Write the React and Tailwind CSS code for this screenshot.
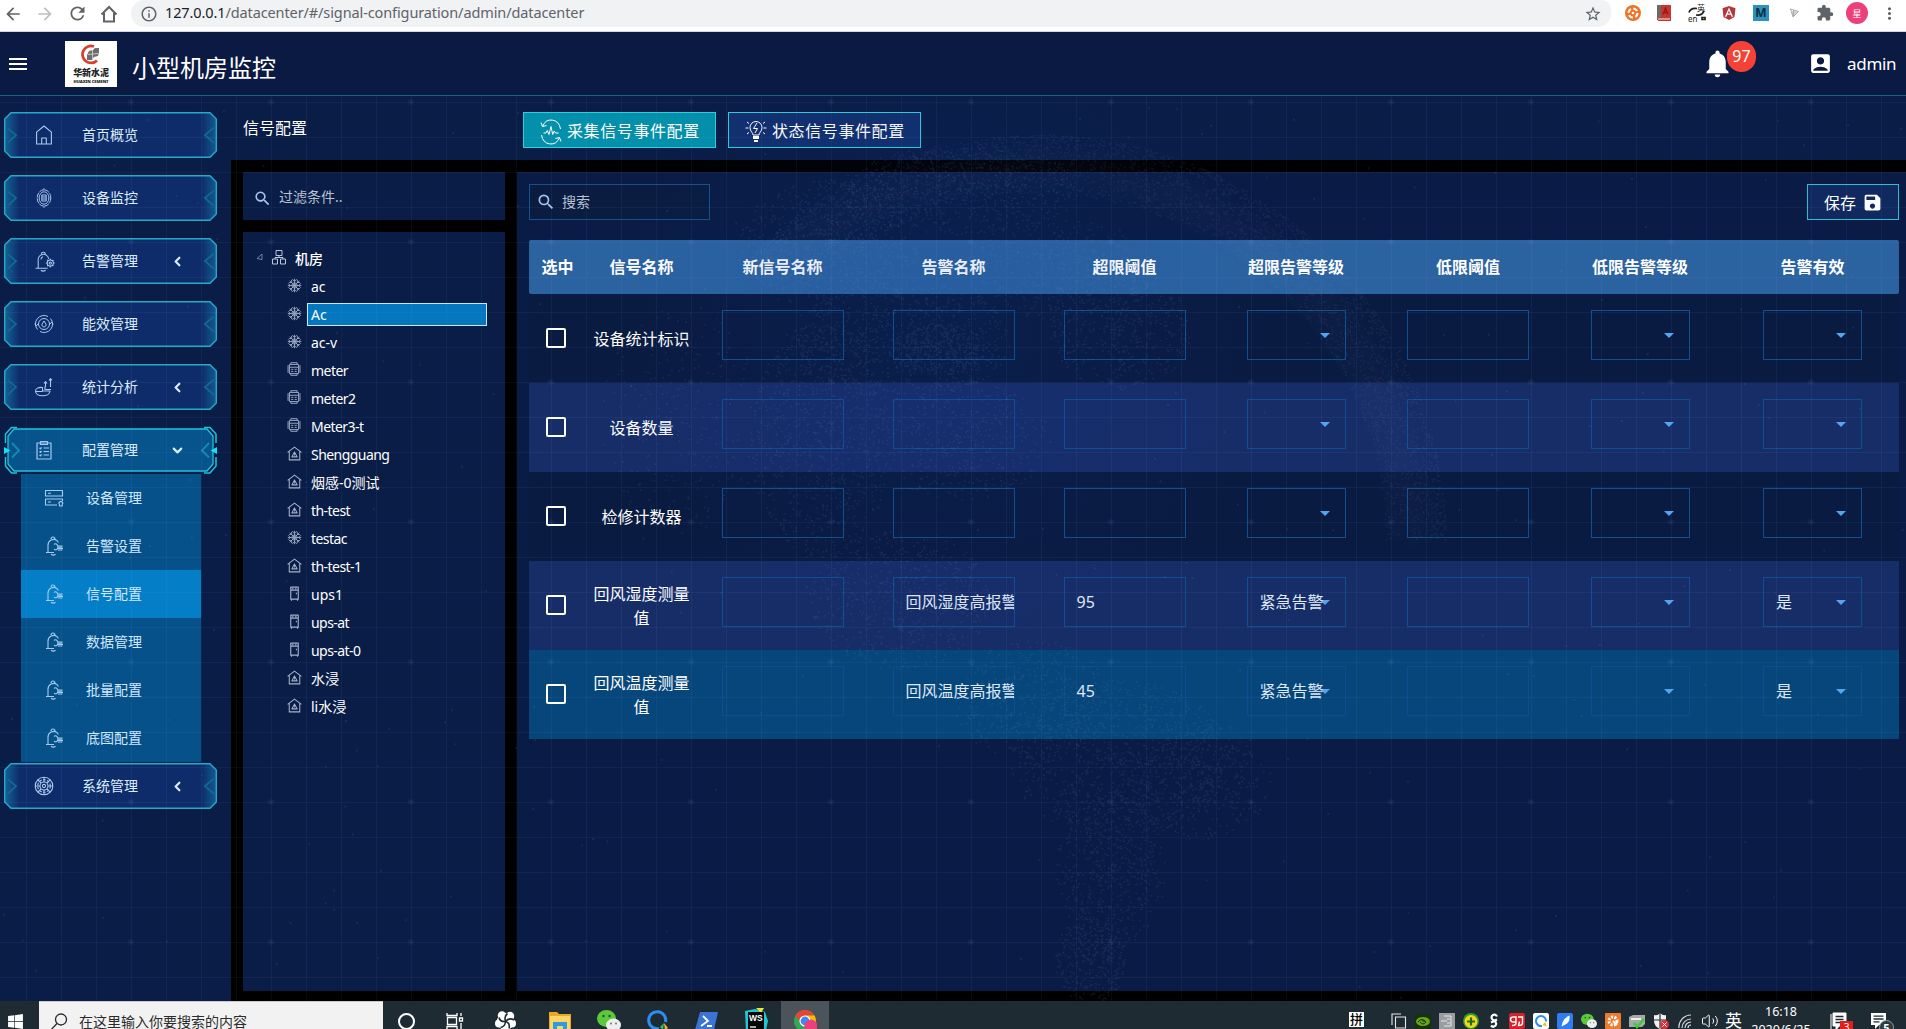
import React from "react";
import {
  MdNotifications,
  MdAccountBox,
  MdSave,
  MdSearch,
  MdMenu,
  MdExtension,
  MdMoreVert,
  MdStarBorder,
  MdInfoOutline,
  MdArrowBack,
  MdArrowForward,
  MdRefresh,
} from "react-icons/md";
import { FaAngular, FaWindows } from "react-icons/fa";
import { ChevronLeft, ChevronDown, Volume2 } from "lucide-react";

/* ---------- background ---------- */

function makeRandom(seed) {
  let s = seed;
  return () => {
    s = (s * 1664525 + 1013904223) % 4294967296;
    return s / 4294967296;
  };
}

function buildGlobe() {
  const rnd = makeRandom(7);
  let rim = "";
  let land = "";
  const dot = (x, y) => `M${x.toFixed(1)} ${y.toFixed(1)}h1.8`;
  for (let i = 0; i < 3600; i++) {
    const a = -2.4 + rnd() * 2.4;
    const r = 405 - Math.pow(rnd(), 1.4) * 60;
    rim += dot(1040 + Math.cos(a) * r, 540 + Math.sin(a) * r);
  }
  const blobs = [
    [830, 240, 90, 60, 600],
    [960, 190, 120, 45, 600],
    [900, 340, 110, 60, 750],
    [940, 350, 50, 25, 350],
    [1120, 330, 70, 60, 450],
    [820, 440, 70, 120, 800],
    [960, 440, 90, 60, 450],
    [900, 600, 90, 70, 550],
    [1060, 270, 100, 50, 400],
    [1030, 700, 80, 60, 450],
    [1120, 760, 110, 80, 900],
    [1200, 780, 70, 60, 400],
    [1110, 870, 55, 80, 550],
    [1090, 960, 35, 45, 350],
    [680, 420, 80, 120, 250],
  ];
  blobs.forEach(([cx, cy, rx, ry, n]) => {
    for (let i = 0; i < n; i++) {
      const a = rnd() * Math.PI * 2;
      const r = Math.pow(rnd(), 0.6);
      land += dot(cx + Math.cos(a) * r * rx, cy + Math.sin(a) * r * ry);
    }
  });
  let stars = "";
  for (let i = 0; i < 240; i++) stars += dot(rnd() * 1906, 100 + rnd() * 900);
  return { rim, land, stars };
}

const globe = buildGlobe();

function Backdrop() {
  return (
    <svg className="pointer-events-none absolute inset-0" width="1906" height="905" viewBox="0 96 1906 905">
      <defs>
        <pattern id="grid" width="35" height="35" x="26" y="32" patternUnits="userSpaceOnUse">
          <path d="M0.5 0V35M0 0.5H35" stroke="#8fb4ff" strokeOpacity="0.055" fill="none" />
        </pattern>
        <radialGradient id="knot">
          <stop offset="0" stopColor="#8fb4ff" stopOpacity="0.11" />
          <stop offset="1" stopColor="#8fb4ff" stopOpacity="0" />
        </radialGradient>
        <pattern id="knots" width="140" height="140" x="61" y="32" patternUnits="userSpaceOnUse">
          <circle cx="70" cy="70" r="4" fill="url(#knot)" />
        </pattern>
        <radialGradient id="glow" cx="940" cy="330" r="330" gradientUnits="userSpaceOnUse">
          <stop offset="0" stopColor="#0a3aa0" stopOpacity="0.12" />
          <stop offset="1" stopColor="#0a3aa0" stopOpacity="0" />
        </radialGradient>
        <filter id="soft" x="-10%" y="-10%" width="120%" height="120%">
          <feGaussianBlur stdDeviation="12" />
        </filter>
      </defs>
      <rect y="96" width="1906" height="905" fill="url(#grid)" />
      <rect y="96" width="1906" height="905" fill="url(#knots)" />
      <rect x="600" y="96" width="700" height="600" fill="url(#glow)" />
      <path
        d="M760 276A385 385 0 0 1 1412 540"
        fill="none"
        stroke="#5f86c8"
        strokeOpacity="0.04"
        strokeWidth="30"
        filter="url(#soft)"
      />
      <path d={globe.rim} stroke="#7d9ac8" strokeOpacity="0.085" strokeWidth="1.6" />
      <path d={globe.land} stroke="#7d9ac8" strokeOpacity="0.11" strokeWidth="1.6" />
      <path d={globe.stars} stroke="#8fb0e8" strokeOpacity="0.11" strokeWidth="2" />
    </svg>
  );
}

/* ---------- line icons ---------- */

function Line({ size = 20, w = 1.1, className = "", children }) {
  return (
    <svg
      className={className}
      width={size}
      height={size}
      viewBox="0 0 20 20"
      fill="none"
      stroke="currentColor"
      strokeWidth={w}
      strokeLinejoin="round"
    >
      {children}
    </svg>
  );
}

const icons = {
  home: (
    <Line>
      <path d="M2.6 7.2 10 1l7.4 6.200V19H2.600zM7.700 19v-6h4.600v6" />
    </Line>
  ),
  device: (
    <Line w={1}>
      <ellipse cx="10" cy="10" rx="6.800" ry="8.200" strokeDasharray="5 1" />
      <ellipse cx="10" cy="10" rx="4.900" ry="6.200" />
      <path d="M7.800 7h4.400v6H7.800zM7.800 9h4.400M7.800 11h4.400M10 .3v2M10 17.700v2" />
    </Line>
  ),
  alarm: (
    <Line size={21} w={1}>
      <path d="M4 16.500V9a5 5 0 0 1 10-1.500M1.500 16.500H13M7 3a1.900 1.900 0 0 1 3.800 0M6.500 18.300q2.300 1.700 4.600 0M6.500 8q.5-2 2-2.500" />
      <circle cx="15.500" cy="11.500" r="2.900" />
      <circle cx="15.500" cy="11.500" r="1.100" />
      <path d="M15.500 7.300v1.300M15.500 14.400v1.400M11.300 11.500h1.300M18.400 11.500h1.400M12.500 8.500l1 1M17.500 13.500l1 1M18.500 8.500l-1 1M12.500 14.500l1-1" />
    </Line>
  ),
  energy: (
    <Line w={1}>
      <circle cx="10" cy="10" r="5.500" />
      <path d="M10 7l-2 3.200a2.100 2.100 0 1 0 4 0z" />
      <path d="M3.500 15.500A8.500 8.500 0 0 1 14 2.500M16.500 4.500A8.500 8.500 0 0 1 6 17.500M.8 9.500l1.400 2.500 1.800-2M19.200 10.500l-1.400-2.500-1.800 2" />
    </Line>
  ),
  stats: (
    <Line w={1.1}>
      <path d="M1.500 14c0-2.500 3-4 7-3.500v3.500h7.500c0 3-3.500 4.800-7.500 4.800s-7-2-7-4.800zM11 9.500v3h6M11.500 10V5M16.500 10V2M10 6.500l1.500-1.800L13 6.500M15 3.500l1.500-1.800L18 3.500M1.500 14.500h7" />
    </Line>
  ),
  config: (
    <Line w={1.200}>
      <path d="M3 3h14v16H3zM6.500 1.500h7v3h-7zM9.500 8H15M9.500 11.500H15M9.500 15H15M5.500 8l1 .8 1-1.400M5.500 11.500l1 .8 1-1.400M5.500 15l1 .8 1-1.400" />
    </Line>
  ),
  system: (
    <Line w={1.100}>
      <circle cx="10" cy="10" r="8.800" />
      <circle cx="10" cy="10" r="6.300" strokeDasharray="2.600 1.400" />
      <circle cx="10" cy="10" r="4" />
      <circle cx="10" cy="10" r="1.600" />
      <path d="M10 1v5M10 14v5M1 10h5M14 10h5M3.600 3.600 7 7M13 13l3.400 3.400M16.400 3.600 13 7M7 13l-3.400 3.400" />
    </Line>
  ),
  server: (
    <Line w={1.100}>
      <path d="M1.500 2.500h17v5.500h-17zM4 5.300h3M13 17h-11.500V11h17v2M4 14h3M15.500 16.500a1.800 1.800 0 1 1 2.700 0v1.500h-2.700z" />
    </Line>
  ),
  bellset: (
    <Line w={1.100}>
      <path d="M4 16.500V9a5.500 5.500 0 0 1 9-4.300l1.500 1.800M2 16.500h8M7 3a2 2 0 0 1 4 0M7 18.300q2.300 1.700 4.500 0" />
      <path d="M10 8.500a2 2 0 0 1 3.500 1.500h5M10 13a2 2 0 0 0 3.500-.5h5.500M13 11.200h5.500M14 14h4.500" />
    </Line>
  ),
};

const treeIcons = {
  snow: (
    <Line size={15} w={1.100}>
      <path d="M10 1v18M1 10h18M3.600 3.600l12.800 12.800M16.400 3.600 3.600 16.400" />
      <path d="M7 1.500 10 4.500l3-3M7 18.500l3-3 3 3M1.500 7l3 3-3 3M18.500 7l-3 3 3 3M2.800 6h3.400V2.500M17.200 6h-3.400V2.500M2.800 14h3.400v3.500M17.200 14h-3.400v3.500" />
      <circle cx="10" cy="10" r="3.500" />
    </Line>
  ),
  meter: (
    <Line size={14} w={1.300}>
      <path d="M3.500 3.500h13v13h-13zM5.500 3.500V1h9v2.500M5.500 16.500V19h9v-2.500M1.500 4.500v11M18.500 4.500v11M3.500 7.500h13M6 10.500h3M11 10.500h3M6 13.500h3M11 13.500h3" />
    </Line>
  ),
  house: (
    <Line size={15} w={1.400}>
      <path d="M.8 8.500 10 1.500 19.200 8.500M3 7V18.500h14V7M10 8 6.500 14.500h7zM10 11v1.500" />
    </Line>
  ),
  ups: (
    <Line size={15} w={1.500}>
      <path d="M5 1.500h10v16H5zM5 5.500h10M7 3.500h1.500M11 3.500h1.500M6 17.500v2M14 17.500v2M12.500 9v2" />
    </Line>
  ),
};

/* ---------- browser bar ---------- */

function BrowserBar() {
  return (
    <div className="flex h-8 w-full items-start bg-white pt-[2px] text-[#5f6368] border-b border-[#d5d7db]">
      <div className="flex h-[23px] w-[131px] shrink-0 items-center gap-[12px] pl-[3px]">
        <MdArrowBack size={20} />
        <MdArrowForward size={20} className="text-[#bdbfc3]" />
        <MdRefresh size={21} />
        <svg width="18" height="18" viewBox="0 0 18 18" fill="none" stroke="currentColor" strokeWidth="2">
          <path d="M1.500 9.500 9 2l7.500 7.500M4 8v8.500h10V8" />
        </svg>
      </div>
      <div className="-mt-[2px] flex h-[27px] w-[1480px] shrink-0 items-center rounded-br-[14px] rounded-l-[14px] rounded-tr-[10px] bg-[#f0f2f4] pr-[9px] pl-[9px]">
        <MdInfoOutline size={18} />
        <span className="-mt-[3px] ml-[7px] whitespace-nowrap text-[14.500px] leading-5 tracking-[-0.110px]">
          <span className="text-[#202124]">127.0.0.1</span>/datacenter/#/signal-configuration/admin/datacenter
        </span>
        <MdStarBorder size={18} className="ml-auto" />
      </div>
      <div className="-mt-[1px] flex h-6 flex-1 items-center pl-[14px]">
        <svg width="16" height="16" viewBox="0 0 16 16">
          <circle cx="8" cy="8" r="8" fill="#f07427" />
          <circle cx="8" cy="8" r="4.500" fill="none" stroke="#fff" strokeWidth="2.200" strokeDasharray="4.500 2.500" />
          <circle cx="8" cy="8" r="1.300" fill="#fff" />
        </svg>
        <svg className="ml-[16px]" width="14" height="16" viewBox="0 0 14 16">
          <path d="M0 0h14v16H1.500L0 14.500z" fill="#c8372f" />
          <path d="M0 0h4v13H0z" fill="#6b6a66" />
          <path d="M1 14h12" stroke="#eee" />
          <path d="M6 9.500 8.500 3 11 9.500M7 7.500h3" stroke="#8d1a14" strokeWidth="1.300" fill="none" />
        </svg>
        <div className="relative ml-[17px] h-5 w-[18px] text-[#222]">
          <span className="absolute top-0 right-[1px] text-[8px] leading-[9px]">英</span>
          <span className="absolute bottom-0 left-0 text-[8px] leading-[8px]">en</span>
          <svg className="absolute inset-0" width="18" height="18" viewBox="0 0 18 18" fill="none" stroke="#222" strokeWidth="1.700">
            <path d="M1 9.500c1-3.500 4-4.500 8-4M8 12c4 .5 7-1 8-4.500M14 14.500h3v2h-3z" />
          </svg>
        </div>
        <FaAngular className="ml-[15px] text-[#b5363c]" size={16} />
        <div className="ml-[16px] flex h-4 w-4 items-center justify-center bg-[#2b92bd] text-[12px] font-bold leading-4 text-[#0d2b40]">
          M
        </div>
        <svg className="ml-[21px]" width="9" height="10" viewBox="0 0 9 10" fill="none" stroke="#a9a9a9">
          <path d="M.5 1 8.500 3.500 3 9zM2 4h5M3.500 2v6M2 6h4" />
        </svg>
        <MdExtension className="ml-[17px]" size={18} />
        <div className="ml-[12px] flex h-[22px] w-[22px] items-center justify-center rounded-full bg-[#ec407a] text-[9px] leading-none text-white">
          星
        </div>
        <MdMoreVert className="ml-[12px]" size={19} />
      </div>
    </div>
  );
}

/* ---------- header ---------- */

function Header() {
  return (
    <div className="flex h-16 w-full items-center border-b border-[#17647f] bg-[#0a1a42] pr-[10px] pl-[6px] text-white">
      <MdMenu size={24} />
      <div className="ml-[35px] flex h-[46px] w-[52px] flex-col items-center bg-white pt-[3px]">
        <svg width="22" height="22" viewBox="0 0 22 22">
          <path d="M14 2.500A8.500 8.500 0 1 0 17 16.500" fill="none" stroke="#d8402c" strokeWidth="2.800" />
          <path d="M9 7l4-1 2-2h4v4l-1 4-4 1-2 3H7v-5z" fill="#6d6d6d" />
          <path d="M12.500 6v9M8 10.500l10-1" stroke="#ddd" strokeWidth=".8" />
        </svg>
        <div className="mt-[1px] text-[9px] font-black leading-[12px] tracking-[-0.1px] text-[#222]">华新水泥</div>
        <div className="whitespace-nowrap text-[4.200px] font-black leading-[5px] tracking-[-0.100px] text-[#222]">HUAXIN CEMENT</div>
      </div>
      <h1 className="mt-[9px] ml-[15px] text-2xl leading-8">小型机房监控</h1>
      <div className="relative ml-auto flex h-9 w-[52px] items-center">
        <MdNotifications size={33} />
        <div className="absolute -top-[5px] left-[26px] flex h-[31px] w-[29px] items-center justify-center rounded-full bg-[#f44336] text-base leading-none">
          97
        </div>
      </div>
      <MdAccountBox size={25} className="ml-[55px]" />
      <span className="ml-[14px] w-[49px] whitespace-nowrap text-[17px] leading-6 tracking-[-0.300px]">admin</span>
    </div>
  );
}

/* ---------- sidebar ---------- */

function Frame({ active }) {
  return (
    <svg className="absolute inset-0 overflow-visible" width="213" height="46" viewBox="0 0 213 46" fill="none">
      <defs>
        <linearGradient id="fade" x1="0" x2="1">
          <stop offset="0" stopColor="#19b6da" stopOpacity="0.4" />
          <stop offset="0.070" stopColor="#19b6da" stopOpacity="0" />
          <stop offset="0.930" stopColor="#19b6da" stopOpacity="0" />
          <stop offset="1" stopColor="#19b6da" stopOpacity="0.35" />
        </linearGradient>
      </defs>
      {active ? (
        <>
          <path d="M10 2H203L209 9V37L203 44H10L4 37V9z" fill="#07538c" stroke="#1fc4df" strokeWidth="1.300" />
          <path
            d="M13 .5H7.500L1.500 7v9M200 .5h6l6 6.500v9M13 46H7.500L1.500 39v-9M200 46h6l6-7v-9"
            stroke="#1cc4dc"
            strokeWidth="1.500"
          />
          <path d="M0 20v7l6.500-3.500zM213 20v7l-6.500-3.500z" fill="#12e0f5" />
          <path d="M8 16 15 23.500l-7 7M205 16l-7 7.500 7 7" stroke="#1488ae" strokeWidth="2" />
        </>
      ) : (
        <>
          <path d="M7 .7H206L212.300 7V39L206 45.300H7L.7 39V7z" fill="#0e2c69" />
          <path d="M7 .7H206L212.300 7V39L206 45.300H7L.7 39V7z" fill="url(#fade)" stroke="#27a9c6" strokeWidth="1.400" />
          <path d="M4 16.500 12 23l-8 7.500M210 15.500 201 23l9 8" stroke="#14688f" strokeWidth="1.800" />
        </>
      )}
    </svg>
  );
}

function MenuButton({ icon, label, arrow, active }) {
  return (
    <div className="relative ml-1 flex h-[46px] w-[213px] items-center text-[#dcecff]">
      <Frame active={active} />
      <span className="relative ml-[29px] flex w-[22px] justify-center text-[#a9c8ee]">{icons[icon]}</span>
      <span className="relative ml-[27px] w-[86px] text-sm leading-5">{label}</span>
      {arrow === "left" && <ChevronLeft className="relative ml-[2px]" size={15} strokeWidth={3.500} />}
      {arrow === "down" && <ChevronDown className="relative ml-[2px]" size={15} strokeWidth={3.500} />}
    </div>
  );
}

function SubItem({ icon, label, selected }) {
  return (
    <div
      className={
        "flex h-12 items-center text-sm leading-5 text-[#cfe8ff] " + (selected ? "bg-[#057ec8]" : "bg-[#06518a]")
      }
    >
      <span className="ml-[22px] flex w-[21px] justify-center text-[#a5cbee]">{icons[icon]}</span>
      <span className="ml-[22px]">{label}</span>
    </div>
  );
}

function Sidebar() {
  return (
    <div className="flex w-[231px] shrink-0 flex-col bg-[#0a1d47] pt-4">
      <div className="flex flex-col gap-[17px]">
        <MenuButton icon="home" label="首页概览" />
        <MenuButton icon="device" label="设备监控" />
        <MenuButton icon="alarm" label="告警管理" arrow="left" />
        <MenuButton icon="energy" label="能效管理" />
        <MenuButton icon="stats" label="统计分析" arrow="left" />
        <MenuButton icon="config" label="配置管理" arrow="down" active />
      </div>
      <div className="mt-[1px] mb-[1px] ml-[21px] w-[180px]">
        <SubItem icon="server" label="设备管理" />
        <SubItem icon="bellset" label="告警设置" />
        <SubItem icon="bellset" label="信号配置" selected />
        <SubItem icon="bellset" label="数据管理" />
        <SubItem icon="bellset" label="批量配置" />
        <SubItem icon="bellset" label="底图配置" />
      </div>
      <MenuButton icon="system" label="系统管理" arrow="left" />
    </div>
  );
}

/* ---------- device tree ---------- */

const devices = [
  ["snow", "ac"],
  ["snow", "Ac", true],
  ["snow", "ac-v"],
  ["meter", "meter"],
  ["meter", "meter2"],
  ["meter", "Meter3-t"],
  ["house", "Shengguang"],
  ["house", "烟感-0测试"],
  ["house", "th-test"],
  ["snow", "testac"],
  ["house", "th-test-1"],
  ["ups", "ups1"],
  ["ups", "ups-at"],
  ["ups", "ups-at-0"],
  ["house", "水浸"],
  ["house", "li水浸"],
];

function Tree() {
  return (
    <div className="flex-1 bg-[#0a1d47] pt-3 text-sm text-white">
      <div className="flex h-7 items-center pt-[1px]">
        <svg className="ml-[13px] -mt-[3px]" width="8" height="8" viewBox="0 0 8 8" fill="none" stroke="#8b9bb9" strokeWidth=".8">
          <path d="M1 5.500 6 1v5.500z" />
        </svg>
        <svg className="ml-[8px] -mt-[2px]" width="14" height="15" viewBox="0 0 14 15" fill="none" stroke="#b9c6dc">
          <path d="M4 .5h6v5H4zM.5 9h5v5h-5zM8.500 9h5v5h-5zM7 5.500V7.500M3 9V7.500h8V9" />
        </svg>
        <span className="ml-[9px] font-medium leading-5">机房</span>
      </div>
      {devices.map(([icon, label, selected]) => (
        <div key={label} className="flex h-7 items-center">
          <span className="ml-[43px] -mt-[2px] flex w-4 justify-center text-[#a3b1cb]">{treeIcons[icon]}</span>
          <span
            className={
              "ml-[5px] h-[23px] w-[180px] border pl-[3px] leading-[22px] " +
              (/^[\x00-\x7f]+$/.test(label) && label.length > 4 ? "tracking-[-0.550px] " : "") +
              (selected ? "border-[#cfe6f8] bg-[#0577bf]" : "border-transparent")
            }
          >
            {label}
          </span>
        </div>
      ))}
    </div>
  );
}

/* ---------- table ---------- */

const headers = ["选中", "信号名称", "新信号名称", "告警名称", "超限阈值", "超限告警等级", "低限阈值", "低限告警等级", "告警有效"];

const rows = [
  { name: "设备统计标识", tone: "plain" },
  { name: "设备数量", tone: "even" },
  { name: "检修计数器", tone: "plain" },
  { name: "回风湿度测量值", alarm: "回风湿度高报警", high: "95", level: "紧急告警", valid: "是", tone: "even" },
  { name: "回风温度测量值", alarm: "回风温度高报警", high: "45", level: "紧急告警", valid: "是", tone: "hover" },
];

const tones = {
  plain: "bg-[#0a1b41]",
  even: "bg-[#172d68]",
  hover: "bg-[#07467a]",
};

function Field({ value, dim }) {
  return (
    <div
      className={
        "mx-auto mt-4 h-[50px] w-[122px] overflow-hidden whitespace-nowrap border pl-[12px] text-base leading-[48px] text-[#dfe9f8] " +
        (dim ? "border-[#0b4e90]" : "border-[#114e91]")
      }
    >
      {value}
    </div>
  );
}

function Select({ value, dim }) {
  return (
    <div
      className={
        "relative mx-auto mt-4 h-[50px] w-[99px] whitespace-nowrap border pl-[12px] text-base leading-[48px] text-[#dfe9f8] " +
        (dim ? "border-[#0b4e90]" : "border-[#114e91]")
      }
    >
      <svg className="absolute top-[22px] right-[15px]" width="10" height="5" viewBox="0 0 10 5">
        <path d="M0 0h10L5 5z" fill="#55a4f0" />
      </svg>
      <span className="relative">{value}</span>
    </div>
  );
}

const grid = "grid grid-cols-[57px_111px_171px_171px_171px_172px_172px_172px_173px]";

function Table() {
  return (
    <div className="mt-5">
      <div className={grid + " h-[54px] items-center rounded-[2px] bg-[#2b62a0] text-center text-base font-bold text-white"}>
        {headers.map((h) => (
          <div key={h} className="leading-6">
            {h}
          </div>
        ))}
      </div>
      {rows.map((r) => {
        const dim = r.tone === "hover";
        return (
          <div key={r.name} className={grid + " h-[89px] " + tones[r.tone]}>
            <div className="flex items-center justify-center">
              <div className="mr-[3px] mb-[2px] h-5 w-5 rounded-[2px] border-2 border-white" />
            </div>
            <div className="flex items-center justify-center px-[7px] pt-[1px] text-center text-base leading-6 text-white">
              {r.name}
            </div>
            <Field dim={dim} />
            <Field value={r.alarm} dim={dim} />
            <Field value={r.high} dim={dim} />
            <Select value={r.level} dim={dim} />
            <Field dim={dim} />
            <Select dim={dim} />
            <Select value={r.valid} dim={dim} />
          </div>
        );
      })}
    </div>
  );
}

/* ---------- main area ---------- */

function Tabs() {
  return (
    <div className="flex gap-3 text-base leading-6 text-white">
      <div className="flex h-9 w-[193px] items-center border border-[#2bd0dc] bg-[#048fab] pl-[16px]">
        <svg className="mt-[3px]" width="22" height="26" viewBox="0 0 22 26" fill="none" stroke="currentColor" strokeWidth="1">
          <path d="M2.500 7.500A9.500 11 0 0 1 20.500 10M19.500 18.500A9.500 11 0 0 1 1.500 16M1 3.500l1.500 4 4-1M21 22.500l-1.500-4-4 1M3.500 14h2.500l1.300-2.500 1.700 4 2-8 1.700 8 1.500-3.500 1.300 2h3" />
        </svg>
        <span className="ml-[5px] mt-[1px] whitespace-nowrap tracking-[0.600px]">采集信号事件配置</span>
      </div>
      <div className="flex h-9 w-[193px] items-center border border-[#2bd0dc] bg-[#12306e] pl-[16px]">
        <svg className="mt-[2px]" width="22" height="24" viewBox="0 0 22 24" fill="none" stroke="currentColor" strokeWidth="1">
          <path d="M8 16c0-2.500-3-3.500-3-7.500a6 6 0 0 1 12 0c0 4-3 5-3 7.500zM12 4 8.500 9.500h4L10 14M.5 9h3M18.500 9h3M2 3l2 1.500M20 3l-2 1.500M2 15l2-1.500M20 15l-2-1.500" />
          <path d="M8 17h6v3H8zM9 21h4v2H9z" fill="currentColor" stroke="none" />
        </svg>
        <span className="ml-[5px] mt-[1px] whitespace-nowrap tracking-[0.600px]">状态信号事件配置</span>
      </div>
    </div>
  );
}

function Main() {
  return (
    <div className="flex flex-1 flex-col bg-black">
      <div className="flex h-16 items-start bg-[#0a1d47] pt-4">
        <div className="mt-[4px] ml-3 w-[280px] text-base leading-6 text-white">信号配置</div>
        <Tabs />
      </div>
      <div className="flex flex-1 gap-3 pt-3 pb-[10px] pl-3">
        <div className="flex w-[262px] shrink-0 flex-col gap-3">
          <div className="flex h-12 items-center bg-[#0a1d47] pl-[10px] text-sm text-[#b9c2d3]">
            <MdSearch size={19} className="mt-[4px] text-[#a8c4f2]" />
            <span className="mt-[2px] ml-[7px] leading-5">过滤条件..</span>
          </div>
          <Tree />
        </div>
        <div className="flex-1 bg-[#0a1c45] pt-3 pr-[7px] pl-3">
          <div className="flex justify-between">
            <div className="flex h-9 w-[181px] items-center border border-[#15508f] bg-[#0a1c40] pl-[6px] text-sm text-[#b9c2d3]">
              <MdSearch size={20} className="text-[#a8c4f2]" />
              <span className="ml-[6px] leading-5">搜索</span>
            </div>
            <div className="flex h-9 w-[92px] items-center border border-[#2bbfd2] bg-[#10295f] pl-[16px] text-base text-white">
              <span className="mt-[1px] leading-6">保存</span>
              <MdSave size={21} className="ml-[6px]" />
            </div>
          </div>
          <Table />
        </div>
      </div>
    </div>
  );
}

/* ---------- taskbar ---------- */

function WeChat({ size, className }) {
  return (
    <svg className={className} width={size} height={size} viewBox="0 0 24 24">
      <ellipse cx="9.500" cy="9.500" rx="9.500" ry="8.500" fill="#5cc83c" />
      <circle cx="6.500" cy="7" r="1.200" fill="#1e5e1a" />
      <circle cx="12.500" cy="7" r="1.200" fill="#1e5e1a" />
      <ellipse cx="16.500" cy="16" rx="7.500" ry="6.500" fill="#eee" />
      <circle cx="14" cy="14.500" r="1" fill="#777" />
      <circle cx="19" cy="14.500" r="1" fill="#777" />
    </svg>
  );
}

function App16({ children }) {
  return (
    <svg width="16" height="16" viewBox="0 0 16 16" className="shrink-0">
      {children}
    </svg>
  );
}

function Cell({ className = "", children }) {
  return <div className={"flex h-[40px] w-[49.500px] shrink-0 items-center justify-center " + className}>{children}</div>;
}

function Taskbar() {
  return (
    <div className="flex h-[28px] w-full items-start overflow-hidden bg-[#1e2b33] text-white">
      <div className="flex h-[40px] w-[39px] items-center justify-start pl-[7px]">
        <FaWindows size={17} />
      </div>
      <div className="flex h-[40px] w-[344px] items-center border-t border-[#c9c9c9] bg-[#f2f2f2] pl-[11px] text-sm text-[#2b2b2b]">
        <svg width="18" height="18" viewBox="0 0 18 18" fill="none" stroke="currentColor" strokeWidth="1.300">
          <circle cx="11" cy="6.500" r="5.500" />
          <path d="M7 10.500 .8 17" />
        </svg>
        <span className="ml-[11px] leading-5">在这里输入你要搜索的内容</span>
      </div>
      <Cell className="pr-[2px]">
        <div className="h-[17px] w-[17px] rounded-full border-2 border-white" />
      </Cell>
      <Cell className="pr-[4px]">
        <svg width="18" height="16" viewBox="0 0 18 16" fill="none" stroke="#fff" strokeWidth="1.300">
          <path d="M1 0v2.500h10V0M1 16v-2.500h10V16M1.500 4.500h9v7h-9zM15 0v3M15 10v6M13.500 5h3v3h-3z" />
        </svg>
      </Cell>
      <Cell className="pr-[3px]">
        <svg width="21" height="21" viewBox="0 0 21 21">
          <circle cx="10.500" cy="10.500" r="8.500" fill="#fff" />
          <circle cx="7" cy="4.500" r="4.200" fill="#fff" />
          <circle cx="15" cy="5" r="4.200" fill="#fff" />
          <circle cx="17" cy="12.500" r="4" fill="#fff" />
          <circle cx="11" cy="17" r="4" fill="#fff" />
          <circle cx="4" cy="12.500" r="4" fill="#fff" />
          <path
            d="M10.500 10.500Q5 11 4 6.500M10.500 10.500Q9 5 12.500 2.500M10.500 10.500Q14 6 19 9M10.500 10.500Q15.500 12 14 17.500M10.500 10.500Q10 16 5.500 16.500"
            fill="none"
            stroke="#1e2b33"
            strokeWidth="1.600"
          />
        </svg>
      </Cell>
      <Cell className="pl-[7px]">
        <svg width="22" height="20" viewBox="0 0 22 20">
          <path d="M0 1h8l2 2h12v17H0z" fill="#e8a823" />
          <path d="M1 5h20v15H1z" fill="#fbd568" />
          <path d="M4 11h14v9h-4v-5H8v5H4z" fill="#2f9ae0" />
        </svg>
      </Cell>
      <Cell className="pl-[6px]">
        <WeChat size={24} />
      </Cell>
      <Cell className="pl-[5px]">
        <svg width="24" height="22" viewBox="0 0 24 22" fill="none">
          <path d="M13 18.500A8.500 8.500 0 1 1 19.500 12" stroke="#2a8ff0" strokeWidth="3" />
          <path d="M18 13l-4 4 3 3z" fill="#2fc35a" />
          <path d="M18 13l4 5-3 2z" fill="#f6bd2b" />
          <path d="M14 20h7" stroke="#ef5b3a" strokeWidth="2" />
        </svg>
      </Cell>
      <Cell className="pl-[4px]">
        <svg width="23" height="18" viewBox="0 0 23 18">
          <path d="M5 0h18l-4 18H0z" fill="#3b74d6" />
          <path d="M8 4l5 5-7 5M12 14h5" stroke="#fff" strokeWidth="1.800" fill="none" />
        </svg>
      </Cell>
      <Cell>
        <svg width="24" height="24" viewBox="0 0 24 24" className="-mt-[2px] ml-[3px]">
          <path d="M1 3l10-2 10 3 3 9-2 9-20 2z" fill="#1fc6d6" />
          <path d="M12 0h8l-3 5z" fill="#e8e63d" />
          <rect x="4" y="4" width="16" height="18" fill="#050505" />
          <text x="5" y="13" fontSize="8.500" fontWeight="700" fill="#fff" fontFamily="Liberation Sans, sans-serif">WS</text>
          <path d="M6 19h6" stroke="#fff" strokeWidth="1.300" />
        </svg>
      </Cell>
      <div className="ml-[2px] flex h-[40px] w-[48px] items-center justify-center bg-[#4b545b]">
        <svg width="24" height="24" viewBox="0 0 24 24">
          <circle cx="12" cy="12" r="11" fill="#31a853" />
          <path d="M2.500 6.500A11 11 0 0 1 21.500 6.500H12L8 14z" fill="#ea4335" />
          <path d="M21.500 6.500A11 11 0 0 1 12 23l4-9-4-7.500z" fill="#fbbc05" />
          <circle cx="12" cy="12" r="5" fill="#4285f4" stroke="#fff" strokeWidth="1.200" />
          <circle cx="18" cy="17" r="6.500" fill="#ec407a" />
        </svg>
      </div>
      <div className="ml-auto flex h-[40px] items-center">
        <div className="-mt-[3px] flex h-[15px] w-[15px] items-center justify-center bg-white text-[13px] font-medium leading-none text-black">拼</div>
        <div className="ml-[27px] flex items-center gap-2">
          <App16>
            <path d="M1 12V1h9M4.500 4h10v11h-10z" fill="none" stroke="#e8e8e8" strokeWidth="1.100" />
          </App16>
          <App16>
            <rect y="1" width="16" height="15" fill="#14330c" />
            <ellipse cx="8" cy="8.500" rx="7" ry="4.500" fill="#69a51b" />
            <path d="M3 9q4-5 8 0-3 4-6 0M7 8h3" stroke="#14330c" fill="none" />
          </App16>
          <App16>
            <rect width="16" height="16" fill="#9a9da0" />
            <path d="M5 3h7v10H5M2 8h6M8 6h3M8 10h3" stroke="#e5e5e5" fill="none" />
          </App16>
          <App16>
            <circle cx="8" cy="8" r="8" fill="#2f9c34" />
            <circle cx="8" cy="8.500" r="6.500" fill="#f5d916" />
            <path d="M8 4.500v8M4 8.500h8" stroke="#226b1a" strokeWidth="2.200" />
          </App16>
          <div className="flex w-[14px] justify-center">
            <svg width="10" height="16" viewBox="0 0 10 16" fill="none" stroke="#fff" strokeWidth="2.200">
              <path d="M8 3.500A2.800 2.800 0 1 0 3.500 6.500L6.500 9A2.800 2.800 0 1 1 2 12.500M8 6.500 2 9.500" />
            </svg>
          </div>
          <App16>
            <rect width="16" height="16" rx="2" fill="#d8202b" />
            <path d="M7 9H4a2 2 0 0 1 0-5h3v6q0 2.500-4 2.500M9 4h4.500v6q0 2.500-4 2.500l1-4" stroke="#fff" strokeWidth="1.400" fill="none" />
          </App16>
          <App16>
            <rect width="16" height="16" rx="2" fill="#fff" />
            <path d="M9 13A5 5 0 1 1 13 8.500" stroke="#2a8ff0" strokeWidth="2" fill="none" />
            <path d="M12 9l-2.500 3 4.500 1.500z" fill="#f3b72b" />
          </App16>
          <App16>
            <rect width="16" height="16" rx="2" fill="#2f7df0" />
            <path d="M12.500 2.500q1 7-5 9.500l-3 1.500 1-4q2-5 7-7z" fill="#fff" />
          </App16>
          <WeChat size={16} />
          <App16>
            <rect width="16" height="16" rx="1" fill="#ee7a2c" />
            <circle cx="8" cy="8" r="4" fill="none" stroke="#fff" strokeWidth="3" strokeDasharray="2 1.300" />
            <path d="M8 8l4 4" stroke="#fff" strokeWidth="2" />
          </App16>
          <App16>
            <path d="M0 4l4-2h12v9l-3 3H0z" fill="#a4aaa6" />
            <path d="M2 6h10" stroke="#eee" strokeWidth="2" />
            <path d="M5 10l3 4 7-8" stroke="#43c93b" strokeWidth="2.600" fill="none" />
          </App16>
          <App16>
            <path d="M1 2q4 1 6-2 3 3 6 2v6q0 5-6 8-6-3-6-8z" fill="#f2f2f2" />
            <path d="M7 0v15M1 7h12" stroke="#1e2b33" strokeWidth="1.200" />
            <circle cx="11.500" cy="11.500" r="4.500" fill="#d8323a" />
            <path d="M9.500 9.500l4 4M13.500 9.500l-4 4" stroke="#fff" />
          </App16>
          <App16>
            <path d="M2 15A12 12 0 0 1 14 2M5 15a9 9 0 0 1 9-9M8 15a6 6 0 0 1 6-6M11 15a3 3 0 0 1 3-3" fill="none" stroke="#d5d8da" strokeWidth="1.200" />
          </App16>
        </div>
        <Volume2 size={18} strokeWidth={1.300} className="ml-[8px]" />
        <span className="ml-[6px] text-[17px] leading-6">英</span>
        <div className="-mt-[1px] ml-[7px] w-[64px] text-center text-[12.500px] leading-[18px]">
          <div>16:18</div>
          <div>2020/6/25</div>
        </div>
        <div className="relative ml-[17px] h-[18px] w-6">
          <svg width="18" height="18" viewBox="0 0 18 18">
            <path d="M1 2v15M3 1h13v13H9l-3 4v-4H3z" fill="#fff" stroke="#fff" />
            <path d="M5.500 4.500h8M5.500 7.500h8M5.500 10.500h5" stroke="#1e2b33" strokeWidth="1.300" />
          </svg>
          <div className="absolute top-[9px] left-[10px] h-3 w-[13px] bg-[#e01e1e] text-center text-[10px] leading-3">3</div>
        </div>
        <div className="relative mr-[12px] ml-[16px] h-[18px] w-6">
          <svg width="18" height="18" viewBox="0 0 18 18">
            <path d="M1 1h15v12H9l-4 4v-4H1z" fill="#fff" />
            <path d="M3.500 4.200h10M3.500 7h10M3.500 9.800h6" stroke="#1e2b33" strokeWidth="1.300" />
          </svg>
          <div className="absolute top-[8px] left-[9px] h-[15px] w-[15px] rounded-full border border-[#9aa0a4] bg-[#2c3a42] text-center text-[11px] font-bold leading-[14px]">
            5
          </div>
        </div>
      </div>
    </div>
  );
}

export default function App() {
  return (
    <div className="flex h-[1029px] w-[1906px] flex-col overflow-hidden font-['Noto_Sans','Noto_Sans_CJK_SC',sans-serif]">
      <BrowserBar />
      <Header />
      <div className="relative flex h-[905px] w-full">
        <Sidebar />
        <Main />
        <Backdrop />
      </div>
      <Taskbar />
    </div>
  );
}
